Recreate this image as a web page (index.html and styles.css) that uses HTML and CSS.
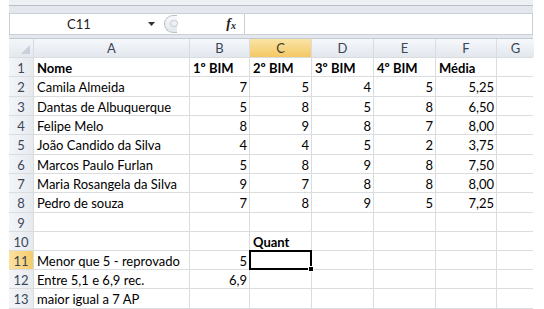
FILE: index.html
```html
<!DOCTYPE html>
<html lang="pt">
<head>
  <meta charset="UTF-8">
  <title>Planilha de Notas</title>
  <link rel="stylesheet" href="styles.css">
</head>
<body>

  <!-- Barra de fórmulas -->
  <div class="formula-bar">
    <div class="name-box">
      <span class="cell-ref">C11</span>
      <svg class="drop" width="7" height="4" viewBox="0 0 7 4"><path d="M0 0h7L3.5 4z" fill="#333"/></svg>
    </div>
    <div class="splitter">
      <span class="knob"></span>
      <span class="fx"><i>f</i><span>x</span></span>
    </div>
    <div class="formula-input"></div>
  </div>

  <!-- Planilha -->
  <div class="sheet">
    <div class="corner"><span class="tri"></span></div>
    <div class="col-hdr">A</div>
    <div class="col-hdr">B</div>
    <div class="col-hdr active">C</div>
    <div class="col-hdr">D</div>
    <div class="col-hdr">E</div>
    <div class="col-hdr">F</div>
    <div class="col-hdr">G</div>

    <div class="row-hdr">1</div>
    <div class="cell bold">Nome</div>
    <div class="cell bold">1º BIM</div>
    <div class="cell bold">2º BIM</div>
    <div class="cell bold">3º BIM</div>
    <div class="cell bold">4º BIM</div>
    <div class="cell bold">Média</div>
    <div class="cell"></div>

    <div class="row-hdr">2</div>
    <div class="cell">Camila Almeida</div>
    <div class="cell num">7</div>
    <div class="cell num">5</div>
    <div class="cell num">4</div>
    <div class="cell num">5</div>
    <div class="cell num">5,25</div>
    <div class="cell"></div>

    <div class="row-hdr">3</div>
    <div class="cell">Dantas de Albuquerque</div>
    <div class="cell num">5</div>
    <div class="cell num">8</div>
    <div class="cell num">5</div>
    <div class="cell num">8</div>
    <div class="cell num">6,50</div>
    <div class="cell"></div>

    <div class="row-hdr">4</div>
    <div class="cell">Felipe Melo</div>
    <div class="cell num">8</div>
    <div class="cell num">9</div>
    <div class="cell num">8</div>
    <div class="cell num">7</div>
    <div class="cell num">8,00</div>
    <div class="cell"></div>

    <div class="row-hdr">5</div>
    <div class="cell">João Candido da Silva</div>
    <div class="cell num">4</div>
    <div class="cell num">4</div>
    <div class="cell num">5</div>
    <div class="cell num">2</div>
    <div class="cell num">3,75</div>
    <div class="cell"></div>

    <div class="row-hdr">6</div>
    <div class="cell">Marcos Paulo Furlan</div>
    <div class="cell num">5</div>
    <div class="cell num">8</div>
    <div class="cell num">9</div>
    <div class="cell num">8</div>
    <div class="cell num">7,50</div>
    <div class="cell"></div>

    <div class="row-hdr">7</div>
    <div class="cell">Maria Rosangela da Silva</div>
    <div class="cell num">9</div>
    <div class="cell num">7</div>
    <div class="cell num">8</div>
    <div class="cell num">8</div>
    <div class="cell num">8,00</div>
    <div class="cell"></div>

    <div class="row-hdr">8</div>
    <div class="cell">Pedro de souza</div>
    <div class="cell num">7</div>
    <div class="cell num">8</div>
    <div class="cell num">9</div>
    <div class="cell num">5</div>
    <div class="cell num">7,25</div>
    <div class="cell"></div>

    <div class="row-hdr">9</div>
    <div class="cell"></div>
    <div class="cell"></div>
    <div class="cell"></div>
    <div class="cell"></div>
    <div class="cell"></div>
    <div class="cell"></div>
    <div class="cell"></div>

    <div class="row-hdr">10</div>
    <div class="cell"></div>
    <div class="cell"></div>
    <div class="cell bold">Quant</div>
    <div class="cell"></div>
    <div class="cell"></div>
    <div class="cell"></div>
    <div class="cell"></div>

    <div class="row-hdr active">11</div>
    <div class="cell">Menor que 5 - reprovado</div>
    <div class="cell num">5</div>
    <div class="cell selected"><span class="handle"></span></div>
    <div class="cell"></div>
    <div class="cell"></div>
    <div class="cell"></div>
    <div class="cell"></div>

    <div class="row-hdr">12</div>
    <div class="cell">Entre 5,1 e 6,9 rec.</div>
    <div class="cell num">6,9</div>
    <div class="cell"></div>
    <div class="cell"></div>
    <div class="cell"></div>
    <div class="cell"></div>
    <div class="cell"></div>

    <div class="row-hdr">13</div>
    <div class="cell">maior igual a 7 AP</div>
    <div class="cell"></div>
    <div class="cell"></div>
    <div class="cell"></div>
    <div class="cell"></div>
    <div class="cell"></div>
    <div class="cell"></div>

    <div class="row-hdr"></div>
    <div class="cell"></div>
    <div class="cell"></div>
    <div class="cell"></div>
    <div class="cell"></div>
    <div class="cell"></div>
    <div class="cell"></div>
    <div class="cell"></div>
  </div>

</body>
</html>
```

FILE: styles.css
```css
body { margin: 0; background: #fff; font-family: Lato, "Liberation Sans", sans-serif; font-size: 13px; color: #000; overflow: hidden; }

/* formula bar */
.formula-bar { display: flex; height: 22px; margin: 0 11px 0 9px; padding: 8px 0 0; border-top: 5px solid #eef1f4; box-shadow: inset 0 1px 0 #b8bfc8; background: #e4e8ee; border-bottom: 3px solid #e4e8ee; }
.name-box { width: 152px; background: #fff; display: flex; align-items: center; border: 1px solid #c9d0d8; border-right: none; }
.cell-ref { flex: 1; text-align: center; color: #222; }
.drop { margin-right: 7px; }
.splitter { width: 82px; background: #fff; border-top: 1px solid #c9d0d8; border-bottom: 1px solid #c9d0d8; display: flex; align-items: center; }
.knob { width: 12px; height: 16px; border: 1px solid #b8c0ca; border-right: none; border-radius: 9px 0 0 9px; background: linear-gradient(#f6f8fa, #e3e7ec); position: relative; margin-left: 2px; }
.knob::after { content: ""; position: absolute; left: 5px; top: 4px; width: 6px; height: 5px; border-radius: 50%; border: 1px solid #c8ced6; }
.fx { margin-left: auto; margin-right: 8px; font-family: "Liberation Serif", serif; font-size: 14px; color: #222; display: flex; }
.fx i { font-weight: bold; }
.fx span { font-size: 10px; font-style: italic; font-weight: bold; margin-top: 4px; }
.formula-input { flex: 1; background: #fff; border: 1px solid #c9d0d8; }

/* sheet grid */
.sheet { display: grid; grid-template-columns: 24px 155px 59px 61px 61px 61px 60px 37px; grid-template-rows: 18px 18px 19px 18px 18px 19px 18px 18px 19px 18px 18px 18px 18px 19px 10px; gap: 1px; background: #dadcdd; margin-left: 9px; width: 524px; border-top: 1px solid #c2cad4; }
.corner { background: linear-gradient(#f4f6f9, #e3e8ee); position: relative; }
.tri { position: absolute; right: 3px; bottom: 3px; width: 0; height: 0; border-left: 9px solid transparent; border-bottom: 9px solid #c9d0d9; }
.col-hdr { background: linear-gradient(#f6f8fb, #e2e7ee); text-align: center; color: #3b4656; line-height: 18px; }
.col-hdr.active { background: linear-gradient(#fbe4a6, #f3c865); color: #3b3b2b; }
.row-hdr { background: linear-gradient(90deg, #f3f5f8, #e6eaef); color: #3b4656; display: flex; align-items: center; justify-content: center; padding-top: 1px; }
.row-hdr.active { background: linear-gradient(90deg, #fbe2a1, #f4cb6c); }
.cell { background: #fff; padding: 1px 2px 0 3px; display: flex; align-items: center; white-space: nowrap; }
.cell.num { justify-content: flex-end; }
.cell.bold { font-weight: bold; }
.cell.selected { position: relative; box-shadow: 0 0 0 1px #000, inset 0 0 0 1px #000; z-index: 1; }
.handle { position: absolute; right: -3px; bottom: -3px; width: 4px; height: 4px; background: #000; border: 1px solid #fff; }
```
